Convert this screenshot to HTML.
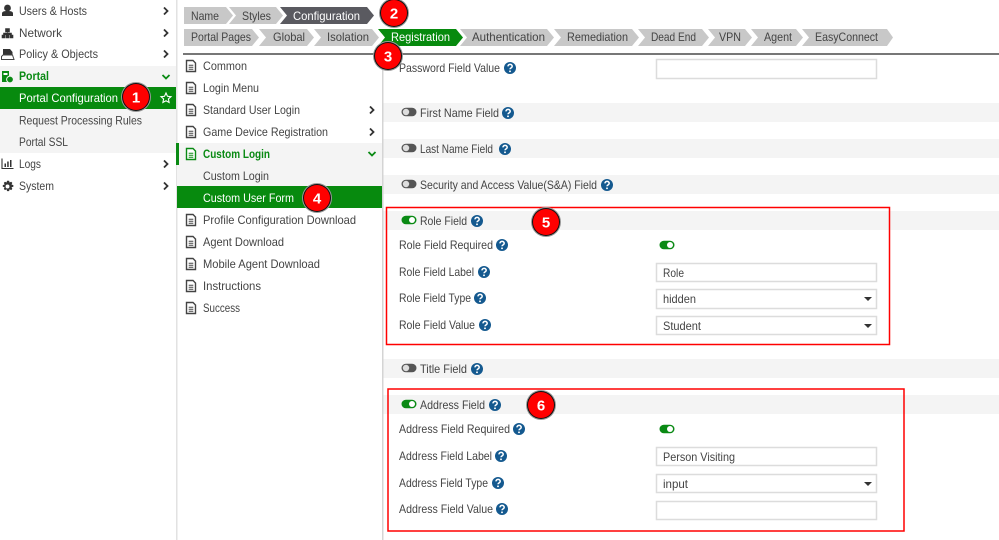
<!DOCTYPE html>
<html><head><meta charset="utf-8"><title>Portal Configuration</title>
<style>
html,body{margin:0;padding:0;background:#fff;width:999px;height:540px;overflow:hidden}
svg{display:block;filter:blur(.3px)}
text{font-family:"Liberation Sans",sans-serif;font-size:12px;fill:#444}
.g{fill:#0a8a14;font-weight:bold}
.w{fill:#fff}
.b{fill:#fff;font-weight:bold;font-size:15px;text-anchor:middle}
.f{fill:#fff;stroke:#dcdcdc;stroke-width:1.5}
</style></head><body>
<svg width="999" height="540" viewBox="0 0 999 540" xmlns="http://www.w3.org/2000/svg">
<defs>
<g id="doc"><path d="M-4.5,-5.500H2L4.500,-3V5.500H-4.500Z" fill="#fff" stroke="#444" stroke-width="1.400"/><path d="M-2.300,-0.800H2.300M-2.300,1.200H2.300M-2.300,3.200H2.300" stroke="#444" stroke-width="1"/></g>
<g id="docg"><path d="M-4.500,-5.500H2L4.500,-3V5.500H-4.500Z" fill="#fff" stroke="#0a8a14" stroke-width="1.400"/><path d="M-2.300,-0.800H2.300M-2.300,1.200H2.300M-2.300,3.200H2.300" stroke="#0a8a14" stroke-width="1"/></g>
<path id="chev" d="M-1.500,-3.500L2,0L-1.500,3.500" fill="none" stroke="#333" stroke-width="1.800"/>
<g id="q"><circle r="6" fill="#14598f"/><path d="M-2,-1.600C-2,-4.300 2.300,-4.300 2.200,-1.600C2.200,-0.100 0,-0.200 0,1.300" fill="none" stroke="#fff" stroke-width="1.500"/><circle cy="3.300" r="0.950" fill="#fff"/></g>
<g id="on"><rect x="-7.500" y="-4.300" width="15" height="8.600" rx="4.300" fill="#0a8a14"/><circle cx="3" r="3" fill="#fff"/></g>
<g id="off"><rect x="-7.500" y="-4.300" width="15" height="8.600" rx="4.300" fill="#555"/><circle cx="-3" r="3.200" fill="#ddd"/></g>
<path id="arr" d="M-4,-2H4L0,2Z" fill="#333"/>
<g id="badge"><circle r="15" fill="#999"/><circle r="14" fill="#111"/><circle r="13" fill="#f00"/></g>
</defs>

<!-- left nav -->
<rect x="0" y="66" width="176" height="87" fill="#f4f4f4"/>
<rect x="0" y="87" width="176" height="22" fill="#078a0e"/>
<rect x="176" y="0" width="1.500" height="540" fill="#e2e2e2"/>
<!-- icons -->
<circle cx="7.500" cy="8" r="3.400" fill="#333"/><path d="M2,16V13.500C2,11.500 4,11 7.500,11S13,11.500 13,13.500V16Z" fill="#333"/>
<path d="M5.500,28.500H9.500V32H5.500ZM2,35H5V38H2ZM6,35H9V38H6ZM10,35H13V38H10ZM3.500,35V33H11.500V35M7.500,32V35" fill="#333" stroke="#333" stroke-width=".6"/>
<path d="M3,49H10L12.500,52V56H3Z" fill="#333"/><path d="M1.500,56.500L3,55H12.500L14,59.500H1.500Z" fill="#fff" stroke="#444"/>
<path d="M2,71H9V82H2Z" fill="#0a8a14"/><rect x="3.500" y="73" width="4" height="2" fill="#fff"/><circle cx="10" cy="79.500" r="3.400" fill="#0a8a14" stroke="#f4f4f4"/>
<path d="M2,158.500V168.500H13.500" fill="none" stroke="#333" stroke-width="1.100"/><path d="M4.500,163.500H6V167H4.500ZM7.200,161.500H8.700V167H7.200ZM10,160H11.500V167H10Z" fill="#333"/>
<g transform="translate(7.500 186.500) scale(1.150) translate(-7.500 -186.500)"><path d="M7.500,181.500l1.400,0l.4,1.500l1.400,-.6l1,1l-.7,1.400l1.600,.5v1.400l-1.600,.5l.7,1.400l-1,1l-1.400,-.7l-.4,1.600h-1.800l-.4,-1.600l-1.400,.7l-1,-1l.7,-1.400l-1.600,-.5v-1.400l1.600,-.5l-.7,-1.400l1,-1l1.400,.6l.4,-1.500Z" fill="#333"/><circle cx="7.500" cy="186.500" r="1.700" fill="#fff"/></g>

<text x="19" y="15" textLength="68" lengthAdjust="spacingAndGlyphs">Users &amp; Hosts</text>
<text x="19" y="37" textLength="43" lengthAdjust="spacingAndGlyphs">Network</text>
<text x="19" y="58" textLength="79" lengthAdjust="spacingAndGlyphs">Policy &amp; Objects</text>
<text x="19" y="80" textLength="30" lengthAdjust="spacingAndGlyphs" class="g">Portal</text>
<text x="19" y="102" textLength="99" lengthAdjust="spacingAndGlyphs" class="w">Portal Configuration</text>
<text x="19" y="124.500" textLength="123" lengthAdjust="spacingAndGlyphs">Request Processing Rules</text>
<text x="19" y="146" textLength="49" lengthAdjust="spacingAndGlyphs">Portal SSL</text>
<text x="19" y="168" textLength="22" lengthAdjust="spacingAndGlyphs">Logs</text>
<text x="19" y="190" textLength="35" lengthAdjust="spacingAndGlyphs">System</text>
<use href="#chev" x="165.500" y="11"/><use href="#chev" x="165.500" y="33"/><use href="#chev" x="165.500" y="54"/>
<path d="M162.500,75L166,78.500L169.500,75" fill="none" stroke="#0a8a14" stroke-width="1.800"/>
<use href="#chev" x="165.500" y="164"/><use href="#chev" x="165.500" y="186"/>
<path d="M166,93L167.500,96.300L171,96.700L168.400,99L169.100,102.500L166,100.800L162.900,102.500L163.600,99L161,96.700L164.500,96.300Z" fill="none" stroke="#fff" stroke-width="1.100"/>

<!-- second menu -->
<rect x="177" y="143" width="205" height="43" fill="#f4f4f4"/>
<rect x="176" y="143" width="3" height="22" fill="#0a8a14"/>
<rect x="177" y="186" width="205" height="22" fill="#078a0e"/>
<rect x="382" y="54" width="1.500" height="486" fill="#d4d4d4"/>
<rect x="183" y="53" width="816" height="2" fill="#777"/>
<use href="#doc" x="191" y="66"/><use href="#doc" x="191" y="88"/><use href="#doc" x="191" y="110"/><use href="#doc" x="191" y="132"/><use href="#docg" x="191" y="154"/><use href="#doc" x="191" y="220"/><use href="#doc" x="191" y="242"/><use href="#doc" x="191" y="264"/><use href="#doc" x="191" y="286"/><use href="#doc" x="191" y="308"/>
<text x="203" y="70" textLength="44" lengthAdjust="spacingAndGlyphs">Common</text>
<text x="203" y="92" textLength="56" lengthAdjust="spacingAndGlyphs">Login Menu</text>
<text x="203" y="114" textLength="97" lengthAdjust="spacingAndGlyphs">Standard User Login</text>
<text x="203" y="136" textLength="125" lengthAdjust="spacingAndGlyphs">Game Device Registration</text>
<text x="203" y="158" textLength="67" lengthAdjust="spacingAndGlyphs" class="g">Custom Login</text>
<text x="203" y="180" textLength="66" lengthAdjust="spacingAndGlyphs">Custom Login</text>
<text x="203" y="202" textLength="91" lengthAdjust="spacingAndGlyphs" class="w">Custom User Form</text>
<text x="203" y="224" textLength="153" lengthAdjust="spacingAndGlyphs">Profile Configuration Download</text>
<text x="203" y="246" textLength="81" lengthAdjust="spacingAndGlyphs">Agent Download</text>
<text x="203" y="268" textLength="117" lengthAdjust="spacingAndGlyphs">Mobile Agent Download</text>
<text x="203" y="290" textLength="58" lengthAdjust="spacingAndGlyphs">Instructions</text>
<text x="203" y="312" textLength="37" lengthAdjust="spacingAndGlyphs">Success</text>
<use href="#chev" x="371.500" y="110"/><use href="#chev" x="371.500" y="132"/>
<path d="M368.500,152L372,155.500L375.500,152" fill="none" stroke="#0a8a14" stroke-width="1.800"/>

<!-- breadcrumbs row 1 -->
<g fill="#c8c8c8">
<path d="M184,7H226L233,15.500L226,24H184Z"/>
<path d="M229,7H276L283,15.500L276,24H229L236,15.500Z"/>
<path d="M280,7H367L374,15.500L367,24H280L287,15.500Z" fill="#5a5a60"/>
<!-- row 2 -->
<path d="M184,29H252L259,37.500L252,46H184Z"/>
<path d="M259,29H307L314,37.500L307,46H259L266,37.500Z"/>
<path d="M314,29H372L379,37.500L372,46H314L321,37.500Z"/>
<path d="M378,29H456L463,37.500L456,46H378L385,37.500Z" fill="#078a0e"/>
<path d="M460,29H547L554,37.500L547,46H460L467,37.500Z"/>
<path d="M554,29H632L639,37.500L632,46H554L561,37.500Z"/>
<path d="M638,29H702L709,37.500L702,46H638L645,37.500Z"/>
<path d="M708,29H745L752,37.500L745,46H708L715,37.500Z"/>
<path d="M751,29H796L803,37.500L796,46H751L758,37.500Z"/>
<path d="M802,29H887L893,37.500L887,46H802L809,37.500Z"/>
</g>
<text x="191" y="20" textLength="28" lengthAdjust="spacingAndGlyphs">Name</text>
<text x="242" y="20" textLength="29" lengthAdjust="spacingAndGlyphs">Styles</text>
<text x="293" y="20" textLength="67" lengthAdjust="spacingAndGlyphs" class="w">Configuration</text>
<text x="191" y="41" textLength="60" lengthAdjust="spacingAndGlyphs">Portal Pages</text>
<text x="273" y="41" textLength="32" lengthAdjust="spacingAndGlyphs">Global</text>
<text x="327" y="41" textLength="42" lengthAdjust="spacingAndGlyphs">Isolation</text>
<text x="391" y="41" textLength="59" lengthAdjust="spacingAndGlyphs" class="w">Registration</text>
<text x="472" y="41" textLength="73" lengthAdjust="spacingAndGlyphs">Authentication</text>
<text x="567" y="41" textLength="61" lengthAdjust="spacingAndGlyphs">Remediation</text>
<text x="651" y="41" textLength="45" lengthAdjust="spacingAndGlyphs">Dead End</text>
<text x="719" y="41" textLength="22" lengthAdjust="spacingAndGlyphs">VPN</text>
<text x="764" y="41" textLength="28" lengthAdjust="spacingAndGlyphs">Agent</text>
<text x="815" y="41" textLength="63" lengthAdjust="spacingAndGlyphs">EasyConnect</text>

<!-- section bars -->
<g fill="#f4f4f4">
<rect x="383.500" y="103" width="616" height="19"/><rect x="383.500" y="139" width="616" height="19"/><rect x="383.500" y="175" width="616" height="19"/><rect x="383.500" y="211" width="616" height="19"/><rect x="383.500" y="359" width="616" height="19"/><rect x="383.500" y="395" width="616" height="19"/>
</g>

<!-- form -->
<text x="399" y="72" textLength="101" lengthAdjust="spacingAndGlyphs">Password Field Value</text><use href="#q" x="510" y="68"/>
<rect class="f" x="656.500" y="59.500" width="220" height="19"/>

<use href="#off" x="409" y="112"/><text x="420" y="117" textLength="79" lengthAdjust="spacingAndGlyphs">First Name Field</text><use href="#q" x="508" y="113"/>
<use href="#off" x="409" y="148"/><text x="420" y="153" textLength="73" lengthAdjust="spacingAndGlyphs">Last Name Field</text><use href="#q" x="505" y="149"/>
<use href="#off" x="409" y="184"/><text x="420" y="189" textLength="177" lengthAdjust="spacingAndGlyphs">Security and Access Value(S&amp;A) Field</text><use href="#q" x="607" y="185"/>
<use href="#on" x="409" y="220"/><text x="420" y="225" textLength="47" lengthAdjust="spacingAndGlyphs">Role Field</text><use href="#q" x="477" y="221"/>
<use href="#off" x="409" y="368"/><text x="420" y="373" textLength="47" lengthAdjust="spacingAndGlyphs">Title Field</text><use href="#q" x="477" y="369"/>
<use href="#on" x="409" y="404"/><text x="420" y="409" textLength="65" lengthAdjust="spacingAndGlyphs">Address Field</text><use href="#q" x="495" y="405"/>

<text x="399" y="249" textLength="94" lengthAdjust="spacingAndGlyphs">Role Field Required</text><use href="#q" x="502" y="245"/>
<use href="#on" x="667" y="245"/>
<text x="399" y="276" textLength="75" lengthAdjust="spacingAndGlyphs">Role Field Label</text><use href="#q" x="484" y="272"/>
<rect class="f" x="656.500" y="263.500" width="220" height="18"/>
<text x="663" y="277" textLength="21" lengthAdjust="spacingAndGlyphs">Role</text>
<text x="399" y="302" textLength="72" lengthAdjust="spacingAndGlyphs">Role Field Type</text><use href="#q" x="480" y="298"/>
<rect class="f" x="656.500" y="289.500" width="220" height="19"/>
<text x="663" y="303" textLength="33" lengthAdjust="spacingAndGlyphs">hidden</text><use href="#arr" x="868" y="299"/>
<text x="399" y="329" textLength="76" lengthAdjust="spacingAndGlyphs">Role Field Value</text><use href="#q" x="485" y="325"/>
<rect class="f" x="656.500" y="316.500" width="220" height="18"/>
<text x="663" y="330" textLength="38" lengthAdjust="spacingAndGlyphs">Student</text><use href="#arr" x="868" y="326"/>

<text x="399" y="433" textLength="111" lengthAdjust="spacingAndGlyphs">Address Field Required</text><use href="#q" x="519" y="429"/>
<use href="#on" x="667" y="429"/>
<text x="399" y="460" textLength="93" lengthAdjust="spacingAndGlyphs">Address Field Label</text><use href="#q" x="501" y="456"/>
<rect class="f" x="656.500" y="447.500" width="220" height="18"/>
<text x="663" y="461" textLength="72" lengthAdjust="spacingAndGlyphs">Person Visiting</text>
<text x="399" y="487" textLength="89" lengthAdjust="spacingAndGlyphs">Address Field Type</text><use href="#q" x="498" y="483"/>
<rect class="f" x="656.500" y="474.500" width="220" height="18"/>
<text x="663" y="488" textLength="25" lengthAdjust="spacingAndGlyphs">input</text><use href="#arr" x="868" y="484"/>
<text x="399" y="513" textLength="94" lengthAdjust="spacingAndGlyphs">Address Field Value</text><use href="#q" x="502" y="509"/>
<rect class="f" x="656.500" y="501.500" width="220" height="18"/>

<!-- red boxes -->
<rect x="386.500" y="207.500" width="503" height="137" fill="none" stroke="#f00" stroke-width="1.500"/>
<rect x="388" y="389" width="516" height="142" fill="none" stroke="#f00" stroke-width="1.500"/>

<!-- badges -->
<use href="#badge" x="136" y="97"/><text class="b" x="136" y="102.500">1</text>
<use href="#badge" x="394" y="13"/><text class="b" x="394" y="18.500">2</text>
<use href="#badge" x="388" y="56"/><text class="b" x="388" y="61.500">3</text>
<use href="#badge" x="317" y="198"/><text class="b" x="317" y="203.500">4</text>
<use href="#badge" x="546" y="222"/><text class="b" x="546" y="227.500">5</text>
<use href="#badge" x="541" y="405"/><text class="b" x="541" y="410.500">6</text>
</svg>
</body></html>
